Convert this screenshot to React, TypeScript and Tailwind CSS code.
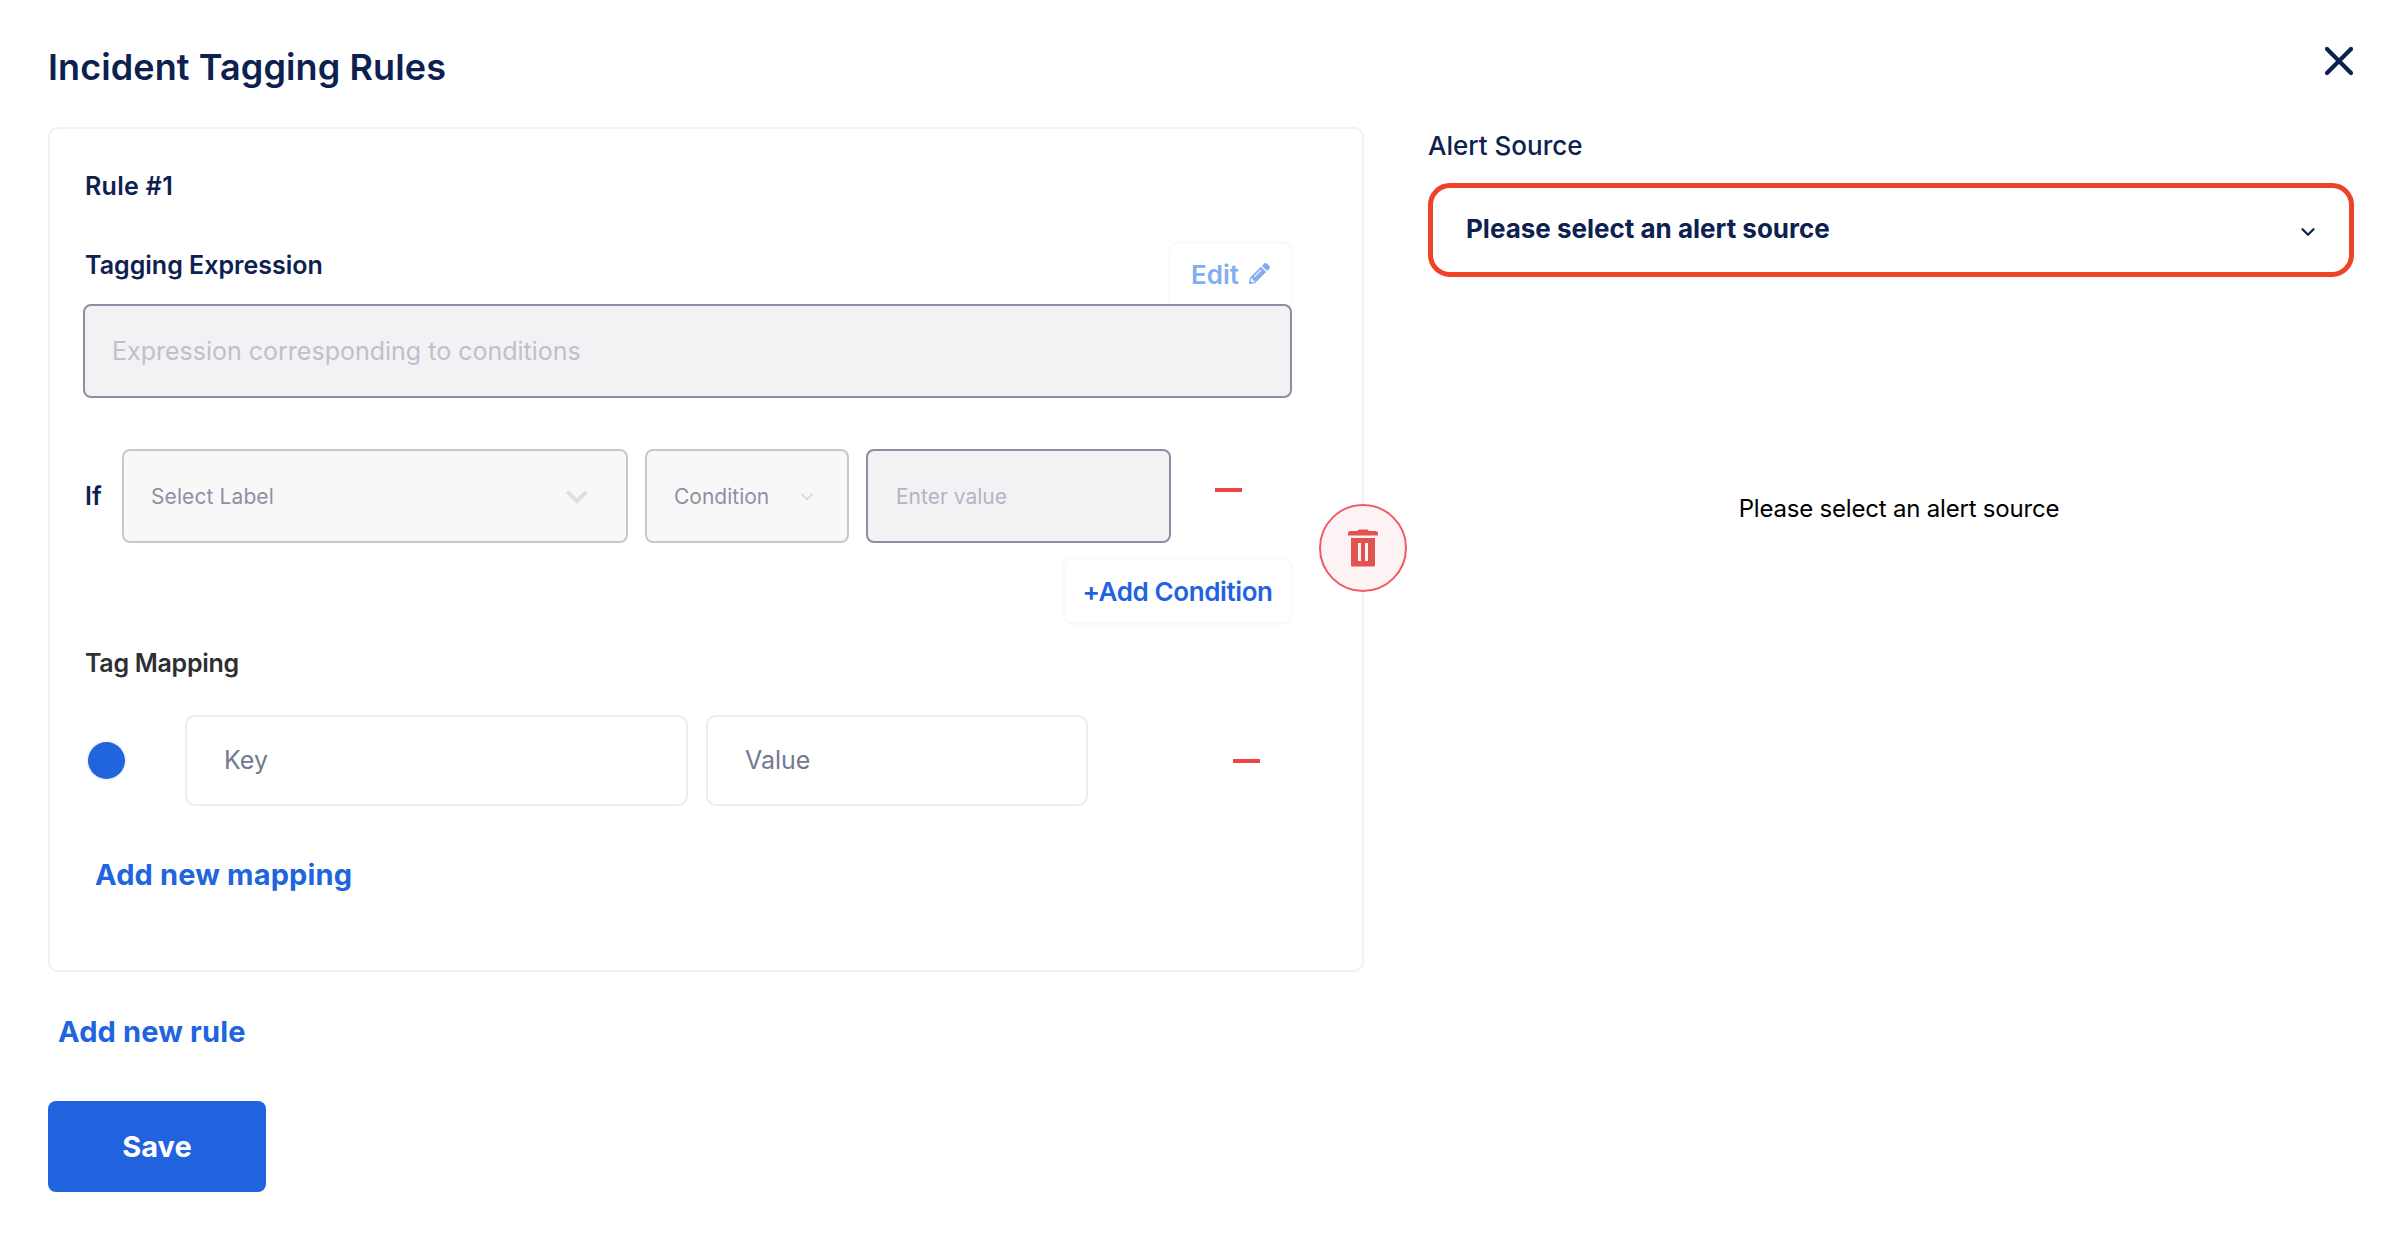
import React from 'react';
import { ChevronDown, X } from 'lucide-react';
import { FaPencilAlt } from 'react-icons/fa';

const TrashIcon = () => (
  <svg width="30" height="38" viewBox="0 0 30 38" className="block">
    <path d="M11 0.5h8a1.5 1.5 0 0 1 1.5 1.5h7a2.5 2.5 0 0 1 2.5 2.5V6.5H0V4.5A2.5 2.5 0 0 1 2.5 2h7A1.5 1.5 0 0 1 11 0.5z" fill="#e0534f" />
    <path fillRule="evenodd" clipRule="evenodd" d="M3 9h24v27a1.5 1.5 0 0 1-1.5 1.5h-21A1.5 1.5 0 0 1 3 36zM10 14v18h3V14zM17 14v18h3V14z" fill="#e0534f" />
  </svg>
);

const Minus = () => <div className="h-[4px] w-[27px] bg-[#ef4444]" />;

const App = () => {
  return (
    <div className="relative h-[1240px] w-[2402px] bg-white font-['Inter',sans-serif] text-[#0d2150]">
      <button className="absolute right-[39px] top-[37px] text-[#0d2150]">
        <X size={48} strokeWidth={2.1} />
      </button>

      <div className="flex pl-[48px] pt-[46px]">
        <div className="w-[1316px] shrink-0">
          <h1 className="h-[42px] text-[36px] font-semibold leading-[42px] tracking-[0.1px]">Incident Tagging Rules</h1>

          <div className="relative mt-[39px] h-[845px] rounded-[10px] border-2 border-[#f1f1f3] pl-[35px] pt-[39px]">
            <div className="text-[25px] font-semibold leading-[36px] tracking-[0.3px]">Rule #1</div>

            <div className="mt-[37px] flex h-[63px] w-[1208px] items-start justify-between">
              <div className="mt-[6px] text-[25px] font-semibold leading-[36px]">Tagging Expression</div>
              <button className="flex h-[70px] w-[125px] items-start justify-center gap-[10px] rounded-[10px] border-[3px] border-[#fafafa] pt-[13px] text-[26px] font-semibold leading-[36px] text-[#82aef0]">
                Edit
                <FaPencilAlt size={21} className="mt-[6px]" />
              </button>
            </div>

            <div className="relative -ml-[2px] flex h-[94px] w-[1209px] items-center rounded-[8px] border-2 border-[#8b8fa3] bg-[#f2f2f5] pl-[27px] pt-[2px] text-[25px] text-[#bfc0cc]">
              Expression corresponding to conditions
            </div>

            <div className="mt-[51px] flex h-[94px] items-center">
              <div className="w-[37px] pt-[2px] text-[25px] font-semibold">If</div>
              <div className="flex h-full w-[506px] items-center justify-between rounded-[8px] border-2 border-[#c6c7d3] bg-[#f8f8f9] pl-[27px] pr-[32px] pt-[2px] text-[21px] tracking-[0.1px] text-[#8e90a3]">
                Select Label
                <ChevronDown size={34} strokeWidth={2.8} className="text-[#dddde5]" />
              </div>
              <div className="ml-[17px] flex h-full w-[204px] items-center justify-between rounded-[8px] border-2 border-[#c6c7d3] bg-[#f8f8f9] pl-[27px] pr-[30px] pt-[2px] text-[21px] text-[#8e90a3]">
                Condition
                <ChevronDown size={20} strokeWidth={2} className="text-[#d5d5de]" />
              </div>
              <div className="ml-[17px] flex h-full w-[305px] items-center rounded-[8px] border-2 border-[#8b8fa3] bg-[#f2f2f5] pl-[28px] pt-[2px] text-[21px] text-[#b4b5c2]">
                Enter value
              </div>
              <div className="mb-[12px] ml-[44px]">
                <Minus />
              </div>
            </div>

            <div className="mt-[14px] flex w-[1208px] justify-end">
              <button className="h-[68px] w-[231px] rounded-[10px] border-[3px] border-[#fafafa] text-[26px] font-semibold tracking-[-0.4px] text-[#1f63e0]">
                +Add Condition
              </button>
            </div>

            <div className="mt-[20px] text-[25px] font-semibold leading-[36px] tracking-[-0.3px] text-[#2e2e33]">Tag Mapping</div>

            <div className="mt-[34px] flex h-[91px] items-center">
              <div className="ml-[3px] h-[37px] w-[37px] rounded-full bg-[#2065de] ring-2 ring-[#f5f5f7]" />
              <div className="ml-[60px] flex h-full w-[503px] items-center rounded-[10px] border-2 border-[#ececf0] pl-[37px] text-[25px] text-[#737a90]">
                Key
              </div>
              <div className="ml-[18px] flex h-full w-[382px] items-center rounded-[10px] border-2 border-[#ececf0] pl-[37px] text-[25px] text-[#737a90]">
                Value
              </div>
              <div className="ml-[145px]">
                <Minus />
              </div>
            </div>

            <div className="ml-[10px] mt-[49px] text-[29px] font-bold leading-[40px] tracking-[0.15px] text-[#2065de]">Add new mapping</div>

            <button className="absolute -right-[45px] top-[375px] flex h-[88px] w-[88px] items-center justify-center rounded-full border-2 border-[#ef5a62] bg-[#fdf3f4]">
              <TrashIcon />
            </button>
          </div>

          <div className="ml-[10px] mt-[40px] text-[29px] font-bold leading-[40px] tracking-[0.15px] text-[#2065de]">Add new rule</div>

          <button className="mt-[49px] block h-[91px] w-[218px] rounded-[8px] bg-[#2163df] text-[29px] font-bold text-white">Save</button>
        </div>

        <div className="ml-[64px] w-[926px] pt-[81px]">
          <div className="h-[38px] text-[26px] font-medium leading-[38px]">Alert Source</div>
          <div className="mt-[18px] flex h-[94px] items-center justify-between rounded-[22px] border-[5px] border-[#ee4328] pl-[33px] pr-[30px]">
            <span className="mb-[3px] text-[26px] font-bold">Please select an alert source</span>
            <ChevronDown size={22} strokeWidth={2.4} className="mt-[4px]" />
          </div>
          <div className="mt-[216px] pl-[16px] text-center text-[24px] leading-[32px] tracking-[-0.2px] text-black">Please select an alert source</div>
        </div>
      </div>
    </div>
  );
};

export default App;
